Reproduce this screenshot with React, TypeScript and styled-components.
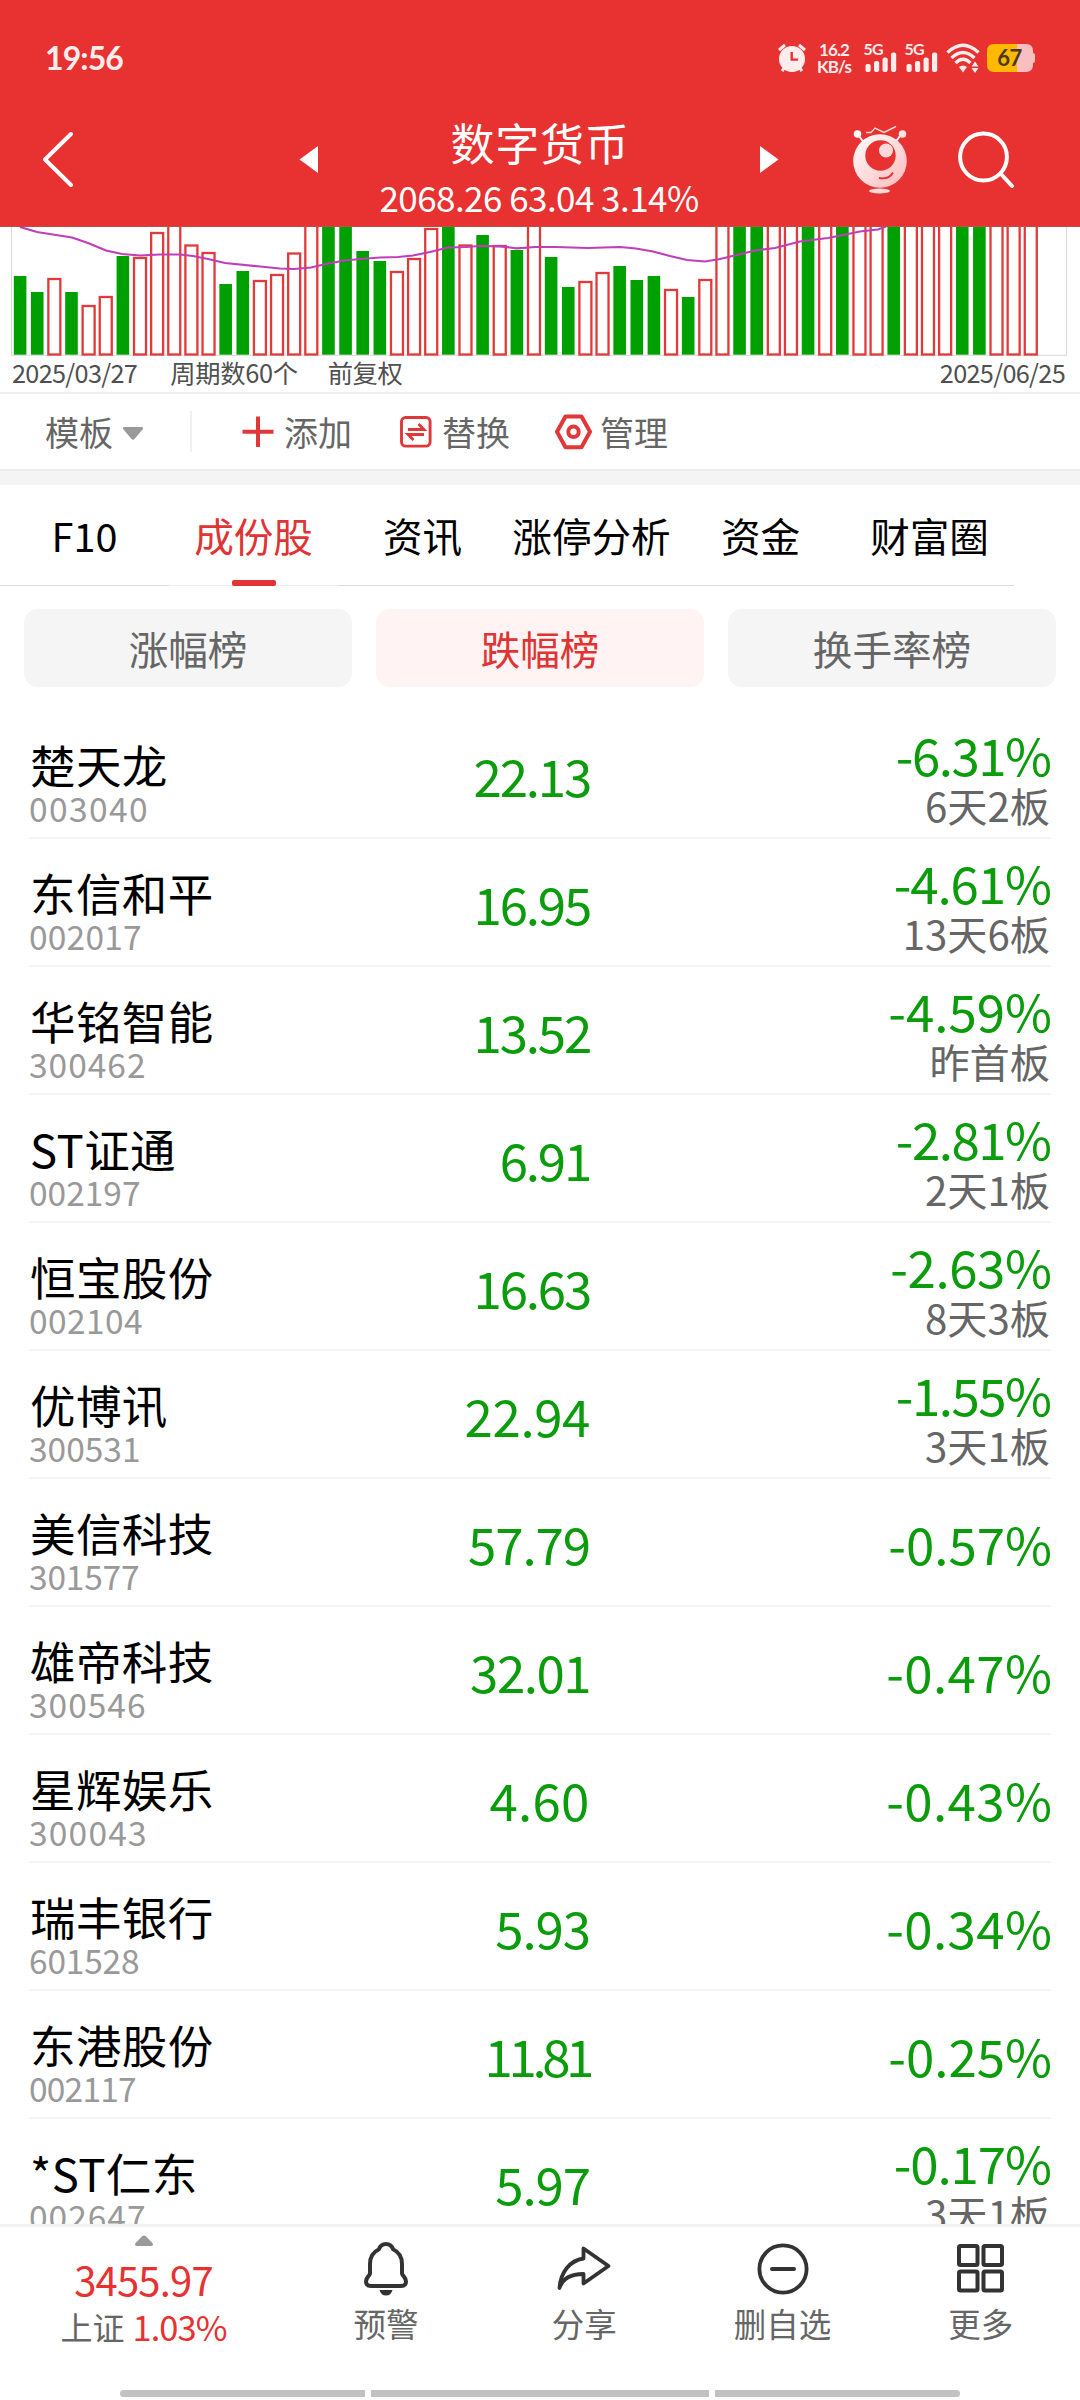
import React from "react";
import styled, { createGlobalStyle } from "styled-components";

const CJK = `"Noto Sans CJK SC", sans-serif`;
const NUM = `Lato, "Noto Sans CJK SC", sans-serif`;
const RED = "#e83131";
const GREEN = "#0a9c0a";

const Global = createGlobalStyle`
  body { margin: 0; background: #fff; }
  * { box-sizing: border-box; }
  svg { display: block; flex: none; }
`;

const Screen = styled.div`
  width: 1080px;
  height: 2400px;
  overflow: hidden;
  display: flex;
  flex-direction: column;
  background: #fff;
  font-family: ${CJK};
  white-space: nowrap;
`;

/* ---------- header ---------- */
const Header = styled.header`
  height: 227px;
  flex: none;
  background: ${RED};
  border-bottom: 1px solid #b9504c;
  color: #fff;
`;
const StatusBar = styled.div`
  height: 116px;
  padding: 0 45px;
  display: flex;
  align-items: center;
`;
const Clock = styled.span`
  font: 700 32px/40px ${NUM};
  letter-spacing: -0.9px;
  color: #ffecec;
  margin-right: auto;
`;
const Speed = styled.div`
  width: 36px;
  margin: 0 12px 1px 9px;
  text-align: center;
  font: 700 17px/17px ${NUM};
  letter-spacing: -0.9px;
  color: #ffecec;
`;
const TitleBar = styled.div`
  height: 110px;
  display: flex;
  align-items: flex-start;
  padding: 0 64px 0 40px;
`;
const TitleBlock = styled.div`
  width: 442px;
  display: flex;
  flex-direction: column;
  align-items: center;
`;
const Title = styled.h1`
  margin: 0;
  padding-left: 2px;
  font: 400 44px/53px ${CJK};
  letter-spacing: 0.7px;
`;
const Quote = styled.div`
  font: 400 35px/40px ${CJK};
  margin-top: 8px;
  letter-spacing: -0.55px;
`;
const IconSlot = styled.div<{ $w: number; $top: number }>`
  width: ${(p) => p.$w}px;
  padding-top: ${(p) => p.$top}px;
`;

/* ---------- chart ---------- */
const ChartBox = styled.section`
  height: 130px;
  flex: none;
`;
const AxisRow = styled.div`
  height: 37px;
  flex: none;
  display: flex;
  padding: 0 15px 0 12px;
  border-bottom: 2px solid #eeeeee;
  font: 400 25.3px/30px ${CJK};
  color: #505050;
`;
const AxisDate = styled.span<{ $right?: boolean }>`
  letter-spacing: -0.7px;
  margin-left: ${(p) => (p.$right ? "auto" : "0")};
`;
const AxisText = styled.span<{ $ml: number }>`
  margin-left: ${(p) => p.$ml}px;
  letter-spacing: -0.3px;
`;

/* ---------- toolbar ---------- */
const Toolbar = styled.div`
  height: 77px;
  flex: none;
  display: flex;
  align-items: center;
  padding-left: 45px;
  border-bottom: 2px solid #ececec;
  font: 400 34px/44px ${CJK};
  color: #666;
`;
const ToolItem = styled.div<{ $gap: number; $ml?: number }>`
  display: flex;
  align-items: center;
  gap: ${(p) => p.$gap}px;
  margin-left: ${(p) => p.$ml || 0}px;
`;
const ToolLabel = styled.span`
  display: block;
`;
const ToolDivider = styled.div`
  width: 2px;
  height: 41px;
  margin-left: 46px;
  background: #f0f0f0;
`;
const Spacer = styled.div`
  height: 14px;
  flex: none;
  background: #f4f4f4;
`;

/* ---------- tabs ---------- */
const Tabs = styled.nav`
  height: 101px;
  flex: none;
  display: flex;
`;
const Tab = styled.div<{ $active?: boolean }>`
  width: 169px;
  height: 101px;
  padding-top: 22px;
  border-bottom: 1px solid ${(p) => (p.$active ? "#ededed" : "#dcdcdc")};
  display: flex;
  flex-direction: column;
  align-items: center;
  font: 400 39.6px/56px ${CJK};
  color: ${(p) => (p.$active ? "#e03434" : "#000")};
`;
const Indicator = styled.div`
  width: 44px;
  height: 6px;
  margin-top: 17px;
  flex: none;
  border-radius: 2px;
  background: #e23434;
`;
const Pills = styled.div`
  display: flex;
  flex: none;
  gap: 24px;
  padding: 23px 24px 24px;
`;
const Pill = styled.div<{ $active?: boolean }>`
  flex: 1;
  height: 78px;
  border-radius: 14px;
  text-align: center;
  font: 400 39.6px/78px ${CJK};
  background: ${(p) => (p.$active ? "#fff3f3" : "#f5f5f5")};
  color: ${(p) => (p.$active ? "#e03434" : "#666")};
`;

/* ---------- list ---------- */
const List = styled.main`
  height: 1513px;
  flex: none;
  overflow: hidden;
`;
const Row = styled.div`
  height: 128px;
  margin: 0 29px;
  border-bottom: 2px solid #f4f4f4;
  display: grid;
  grid-template-columns: 300px 261px 1fr;
`;
const NameCell = styled.div`
  padding-top: 25px;
`;
const Name = styled.div`
  padding-left: 1px;
  font: 400 45.5px/56px ${CJK};
  letter-spacing: 0.4px;
  color: #000;
`;
const Code = styled.div<{ $ls: number }>`
  font: 400 33.5px/32px ${CJK};
  letter-spacing: ${(p) => p.$ls}px;
  color: #999;
`;
const Price = styled.div<{ $ls: number }>`
  text-align: right;
  font: 400 51px/128px ${CJK};
  letter-spacing: ${(p) => p.$ls}px;
  padding-right: ${(p) => Math.max(0, p.$ls)}px;
  color: ${GREEN};
`;
const ChangeCell = styled.div`
  display: flex;
  flex-direction: column;
  justify-content: center;
  align-items: flex-end;
  padding-top: 5px;
`;
const Change = styled.div<{ $ls: number; $alone: boolean }>`
  font: 400 51px/52px ${CJK};
  letter-spacing: ${(p) => p.$ls}px;
  margin-right: ${(p) => -p.$ls - 1}px;
  margin-bottom: ${(p) => (p.$alone ? 6 : 0)}px;
  color: ${GREEN};
`;
const Note = styled.div`
  font: 400 40.2px/44px ${CJK};
  margin-top: 3px;
  padding-right: 1px;
  color: #666;
`;

/* ---------- bottom bar ---------- */
const BottomBar = styled.footer`
  height: 166px;
  flex: none;
  border-top: 3px solid #f2f2f2;
  display: flex;
`;
const IndexCell = styled.div`
  width: 287px;
  padding-top: 8px;
  display: flex;
  flex-direction: column;
  align-items: center;
`;
const IndexValue = styled.div`
  font: 400 40px/46px ${CJK};
  letter-spacing: -0.8px;
  margin-top: 9px;
  color: ${RED};
`;
const IndexLine = styled.div`
  display: flex;
  gap: 8px;
  margin-top: 1px;
  font: 400 32px/46px ${CJK};
  color: #666;
`;
const IndexPct = styled.span`
  font: 400 34.5px/46px ${CJK};
  letter-spacing: -1px;
  color: ${RED};
`;
const Action = styled.div`
  flex: 1;
  display: flex;
  flex-direction: column;
  align-items: center;
  padding-top: 13px;
  font: 400 32.5px/44px ${CJK};
  color: #666;
`;
const ActionLabel = styled.span`
  margin-top: 5px;
`;
const HomeBar = styled.div`
  height: 10px;
  flex: none;
  display: flex;
  gap: 6px;
  padding: 0 120px 3px;
`;
const HomeSegment = styled.div<{ $w: number; $r: string }>`
  width: ${(p) => p.$w}px;
  height: 7px;
  border-radius: ${(p) => p.$r};
  background: #c1c1c1;
`;

/* ---------- data ---------- */
const FULL = 200;
const bars: [string, number][] = [
  ["g", 276], ["g", 292], ["r", 278], ["g", 292], ["r", 305], ["r", 296], ["g", 256], ["r", 257],
  ["r", 232], ["r", FULL], ["r", 244.5], ["r", 252], ["g", 284], ["g", 271], ["r", 280], ["r", 274],
  ["r", 252.5], ["r", FULL], ["g", FULL], ["g", FULL], ["g", 251], ["g", 261], ["r", 271], ["r", 258],
  ["r", 228], ["g", FULL], ["r", 244.5], ["g", 235], ["r", 245], ["g", 250], ["r", FULL], ["g", 257],
  ["g", 287], ["r", 281], ["r", 272], ["g", 266], ["g", 280], ["g", 276], ["r", 289], ["g", 297],
  ["r", 279], ["r", FULL], ["g", FULL], ["g", FULL], ["r", FULL], ["r", FULL], ["g", FULL], ["r", FULL],
  ["g", FULL], ["r", FULL], ["r", FULL], ["g", FULL], ["r", FULL], ["r", FULL], ["r", FULL], ["g", FULL],
  ["g", FULL], ["r", FULL], ["r", FULL], ["r", FULL],
];
const average =
  "20,227 37,232 72,237.5 88,243 106,250.5 122,254 140,255.5 160,254.5 180,254.5 193,256 208,259 225,263 260,266.5 280,268.5 294,269 311,267.5 328,263.5 345,260.5 360,259 380,257.5 398,257 413,255.5 430,252 448,247.5 466,247 480,246 500,246.3 517,248.3 535,247 555,247 588,248 620,247 636,248.5 653,251.5 670,256 687,260 705,261.5 720,259 737,255 755,250.5 775,248 800,241.5 828,238 860,231.5 878,229.5 887,226";

const stocks: [string, string, string, string, string?][] = [
  ["楚天龙", "003040", "22.13", "-6.31%", "6天2板"],
  ["东信和平", "002017", "16.95", "-4.61%", "13天6板"],
  ["华铭智能", "300462", "13.52", "-4.59%", "昨首板"],
  ["ST证通", "002197", "6.91", "-2.81%", "2天1板"],
  ["恒宝股份", "002104", "16.63", "-2.63%", "8天3板"],
  ["优博讯", "300531", "22.94", "-1.55%", "3天1板"],
  ["美信科技", "301577", "57.79", "-0.57%"],
  ["雄帝科技", "300546", "32.01", "-0.47%"],
  ["星辉娱乐", "300043", "4.60", "-0.43%"],
  ["瑞丰银行", "601528", "5.93", "-0.34%"],
  ["东港股份", "002117", "11.81", "-0.25%"],
  ["*ST仁东", "002647", "5.97", "-0.17%", "3天1板"],
];

/* Optical tracking: narrow "1" pulls a number together, round "0" and "4" open it. */
const tracking = (text: string, base: number, wide: number, narrow: number) => {
  const ones = text.split("1").length - 1;
  const rounds = text.split(/[04]/).length - 1;
  return base + rounds * wide - ones * narrow;
};

/* ---------- icons ---------- */
const AlarmIcon = () => (
  <svg width="30" height="30" viewBox="0 0 30 30">
    <circle cx="15" cy="16" r="13" fill="#ffecec" />
    <path d="M2 7 L8 2 M28 7 L22 2 M5 28 L8 24 M25 28 L22 24" stroke="#ffecec" strokeWidth="3" />
    <path d="M14.7 9 V16.6 H21" stroke={RED} strokeWidth="2.4" fill="none" />
  </svg>
);

const SignalIcon = () => (
  <svg width="41" height="30" viewBox="0 0 41 30" overflow="visible">
    <text x="-0.5" y="12" fontFamily="Lato, sans-serif" fontWeight="700" fontSize="16" letterSpacing="-0.8" fill="#ffecec">5G</text>
    <g fill="#ffecec">
      <rect x="1.5" y="21" width="5.2" height="8" rx="2" />
      <rect x="10" y="18" width="5.2" height="11" rx="2" />
      <rect x="18.5" y="14.5" width="5.2" height="14.5" rx="2" />
      <rect x="27" y="9.5" width="5.2" height="19.5" rx="2" />
    </g>
  </svg>
);

const WifiIcon = () => (
  <svg width="41" height="30" viewBox="0 0 41 30">
    <g fill="none" stroke="#ffecec" strokeWidth="3.4">
      <path d="M1.5 9.5 Q17 -5 32.5 9.5" />
      <path d="M5.5 15 Q17 4 28.5 15" />
      <path d="M9.5 20 Q17 12.5 24.5 20" />
    </g>
    <path d="M13 24 Q17 21 21 24 L17 29.5 Z" fill="#ffecec" />
    <path d="M25.5 23.5 L29 18.5 L32.5 23.5 Z M25.5 25 L29 30 L32.5 25 Z" fill="#ffecec" />
  </svg>
);

const BatteryIcon = () => (
  <svg width="48" height="28" viewBox="0 0 48 28">
    <path d="M30 0 H39 Q46 0 46 7 V9 Q48 9 48 11 V17 Q48 19 46 19 V21 Q46 28 39 28 H30 Z" fill="#f9bfc0" />
    <path d="M7 0 H30 V28 H7 Q0 28 0 21 V7 Q0 0 7 0 Z" fill="#ffb900" />
    <text x="22.5" y="21.8" textAnchor="middle" fontFamily="Lato, sans-serif" fontWeight="700" fontSize="22" letterSpacing="-0.6" fill="#4a3a10">67</text>
  </svg>
);

const Mascot = () => (
  <svg width="60" height="72" viewBox="0 0 60 72">
    <defs>
      <linearGradient id="body" x1="0" y1="0" x2="1" y2="1">
        <stop offset="0" stopColor="#fff" />
        <stop offset="1" stopColor="#ffb9b9" />
      </linearGradient>
    </defs>
    <path d="M9 11 L15 19 M50 11 L44 19" stroke="#fff" strokeWidth="2" />
    <circle cx="7.5" cy="9" r="3.8" fill="#fff" />
    <circle cx="52.5" cy="9" r="3.8" fill="#ffe4e4" />
    <path d="M16 7.5 L21 7.5 L25 3 L34 7.5 L46 1.5" stroke="#ffd8d8" strokeWidth="1.4" fill="none" />
    <circle cx="30" cy="36" r="26.8" fill="url(#body)" />
    <circle cx="30.5" cy="30.5" r="15.2" fill={RED} />
    <circle cx="36" cy="25.5" r="7" fill="#ffd9d9" />
    <path d="M29 53 Q39 55 43 47.5" stroke={RED} strokeWidth="1.8" fill="none" />
    <ellipse cx="29.5" cy="66" rx="10.5" ry="2.4" fill="#ffd9d9" />
  </svg>
);

const BellIcon = () => (
  <svg width="50" height="56" viewBox="0 0 50 56">
    <path
      d="M25 4 C21.5 4 19 6 18 9.2 C12 12 9 18 9 24 V33.5 C9 35.5 5 37 5 41.5 C5 44.5 7 46 10 46 H40 C43 46 45 44.5 45 41.5 C45 37 41 35.5 41 33.5 V24 C41 18 38 12 32 9.2 C31 6 28.5 4 25 4 Z"
      fill="none" stroke="#333" strokeWidth="4" strokeLinejoin="round"
    />
    <path d="M18.5 50 H31.5 Q30 55.5 25 55.5 Q20 55.5 18.5 50 Z" fill="#333" />
  </svg>
);

const ShareIcon = () => (
  <svg width="54" height="56" viewBox="0 0 54 56">
    <path
      d="M2.5 48 C3.5 32 13 20.5 26.5 18.5 V8.5 L51.5 26 L26.5 43.5 V34 C15 34 6 37 2.5 48 Z"
      fill="none" stroke="#333" strokeWidth="3.8" strokeLinejoin="round"
    />
  </svg>
);

const MinusIcon = () => (
  <svg width="52" height="56" viewBox="0 0 52 56">
    <circle cx="26" cy="29" r="23.6" fill="none" stroke="#333" strokeWidth="3.8" />
    <path d="M15 29 H37" stroke="#333" strokeWidth="4" strokeLinecap="round" />
  </svg>
);

const GridIcon = () => (
  <svg width="50" height="56" viewBox="0 0 50 56">
    <g fill="none" stroke="#333" strokeWidth="4">
      <rect x="3" y="6" width="18.5" height="19" rx="1.5" />
      <rect x="27.5" y="6" width="18.5" height="19" rx="1.5" />
      <rect x="3" y="31.5" width="18.5" height="19" rx="1.5" />
      <rect x="27.5" y="31.5" width="18.5" height="19" rx="1.5" />
    </g>
  </svg>
);

const VolumeChart = () => (
  <svg width="1080" height="130" viewBox="0 227 1080 130">
    <path d="M11.5 227 V355.3 H1066.5 V227" fill="none" stroke="#d8d8d8" strokeWidth="1" />
    {bars.map(([kind, top], i) => {
      const cx = 20 + i * 17.13;
      return kind === "g" ? (
        <rect key={i} x={cx - 6.2} y={top} width="12.6" height={354.7 - top} fill="#00a000" />
      ) : (
        <rect key={i} x={cx - 5.9} y={top + 1} width="12" height={353.5 - top} fill="#fff" stroke="#e23a3a" strokeWidth="2.3" />
      );
    })}
    <polyline points={average} fill="none" stroke="#bf3fb8" strokeWidth="2.2" />
  </svg>
);

export default function App() {
  return (
    <Screen>
      <Global />
      <Header>
        <StatusBar>
          <Clock>19:56</Clock>
          <AlarmIcon />
          <Speed>16.2<br />KB/s</Speed>
          <SignalIcon />
          <SignalIcon />
          <WifiIcon />
          <BatteryIcon />
        </StatusBar>
        <TitleBar>
          <IconSlot $w={259} $top={13}>
            <svg width="36" height="60" viewBox="0 0 36 60">
              <path d="M31 5 L5 30.5 L31 56" fill="none" stroke="#fff" strokeWidth="4" strokeLinecap="round" strokeLinejoin="round" />
            </svg>
          </IconSlot>
          <IconSlot $w={19} $top={30}>
            <svg width="19" height="28" viewBox="0 0 19 28"><path d="M0.5 13.5 L19 0 V27 Z" fill="#fff" /></svg>
          </IconSlot>
          <TitleBlock>
            <Title>数字货币</Title>
            <Quote>2068.26 63.04 3.14%</Quote>
          </TitleBlock>
          <IconSlot $w={90} $top={30}>
            <svg width="19" height="28" viewBox="0 0 19 28"><path d="M18.5 13.5 L0 0 V27 Z" fill="#fff" /></svg>
          </IconSlot>
          <IconSlot $w={106} $top={9}><Mascot /></IconSlot>
          <IconSlot $w={60} $top={13}>
            <svg width="62" height="62" viewBox="0 0 62 62">
              <circle cx="27.5" cy="28" r="23.4" fill="none" stroke="#fff" strokeWidth="4" />
              <path d="M45 45 L56 57" stroke="#fff" strokeWidth="4" strokeLinecap="round" />
            </svg>
          </IconSlot>
        </TitleBar>
      </Header>

      <ChartBox><VolumeChart /></ChartBox>
      <AxisRow>
        <AxisDate>2025/03/27</AxisDate>
        <AxisText $ml={33}>周期数60个</AxisText>
        <AxisText $ml={30}>前复权</AxisText>
        <AxisDate $right>2025/06/25</AxisDate>
      </AxisRow>

      <Toolbar>
        <ToolItem $gap={9}>
          <ToolLabel>模板</ToolLabel>
          <svg width="22" height="16" viewBox="0 0 22 16">
            <path d="M2.5 3 H19.5 Q22 3 20.5 5.5 L12.5 15 Q11 16.5 9.5 15 L1.5 5.5 Q0 3 2.5 3 Z" fill="#999" />
          </svg>
        </ToolItem>
        <ToolDivider />
        <ToolItem $gap={10} $ml={50}>
          <svg width="32" height="32" viewBox="0 0 32 32"><path d="M16 0.5 V31 M0.5 15.8 H31.5" stroke="#e03838" strokeWidth="4" /></svg>
          <ToolLabel>添加</ToolLabel>
        </ToolItem>
        <ToolItem $gap={10} $ml={48}>
          <svg width="32" height="32" viewBox="0 0 32 32" fill="none" stroke="#e03838">
            <rect x="1.5" y="1.5" width="28.6" height="28.6" rx="4" strokeWidth="2.9" />
            <path d="M8 13.5 H24 L18.5 8 M24 18.5 H8 L13.5 24" strokeWidth="2.8" />
          </svg>
          <ToolLabel>替换</ToolLabel>
        </ToolItem>
        <ToolItem $gap={8} $ml={45}>
          <svg width="37" height="36" viewBox="0 0 37 36" fill="none" stroke="#e03838">
            <path d="M10.5 2.5 H26.5 L35 17.8 L26.5 33.2 H10.5 L2 17.8 Z" strokeWidth="4" strokeLinejoin="round" />
            <circle cx="18.5" cy="17.8" r="5.2" strokeWidth="4" />
          </svg>
          <ToolLabel>管理</ToolLabel>
        </ToolItem>
      </Toolbar>
      <Spacer />

      <Tabs>
        <Tab>F10</Tab>
        <Tab $active>成份股<Indicator /></Tab>
        <Tab>资讯</Tab>
        <Tab>涨停分析</Tab>
        <Tab>资金</Tab>
        <Tab>财富圈</Tab>
      </Tabs>
      <Pills>
        <Pill>涨幅榜</Pill>
        <Pill $active>跌幅榜</Pill>
        <Pill>换手率榜</Pill>
      </Pills>

      <List>
        {stocks.map(([name, code, price, change, note]) => (
          <Row key={code}>
            <NameCell>
              <Name>{name}</Name>
              <Code $ls={tracking(code, 0.4, 0.2, 0.8)}>{code}</Code>
            </NameCell>
            <Price $ls={tracking(price, -1.1, 0.7, 1.1)}>{price}</Price>
            <ChangeCell>
              <Change $ls={tracking(change, -0.4, 0.4, 1.1)} $alone={!note}>{change}</Change>
              {note && <Note>{note}</Note>}
            </ChangeCell>
          </Row>
        ))}
      </List>

      <BottomBar>
        <IndexCell>
          <svg width="20" height="12" viewBox="0 0 20 12">
            <path d="M8.5 1 Q10 0 11.5 1 L18.5 8 Q20 11 17 11 H3 Q0 11 1.5 8 Z" fill="#999" />
          </svg>
          <IndexValue>3455.97</IndexValue>
          <IndexLine>上证<IndexPct>1.03%</IndexPct></IndexLine>
        </IndexCell>
        <Action><BellIcon /><ActionLabel>预警</ActionLabel></Action>
        <Action><ShareIcon /><ActionLabel>分享</ActionLabel></Action>
        <Action><MinusIcon /><ActionLabel>删自选</ActionLabel></Action>
        <Action><GridIcon /><ActionLabel>更多</ActionLabel></Action>
      </BottomBar>
      <HomeBar>
        <HomeSegment $w={245} $r="4px 0 0 4px" />
        <HomeSegment $w={338} $r="0" />
        <HomeSegment $w={245} $r="0 4px 4px 0" />
      </HomeBar>
    </Screen>
  );
}
